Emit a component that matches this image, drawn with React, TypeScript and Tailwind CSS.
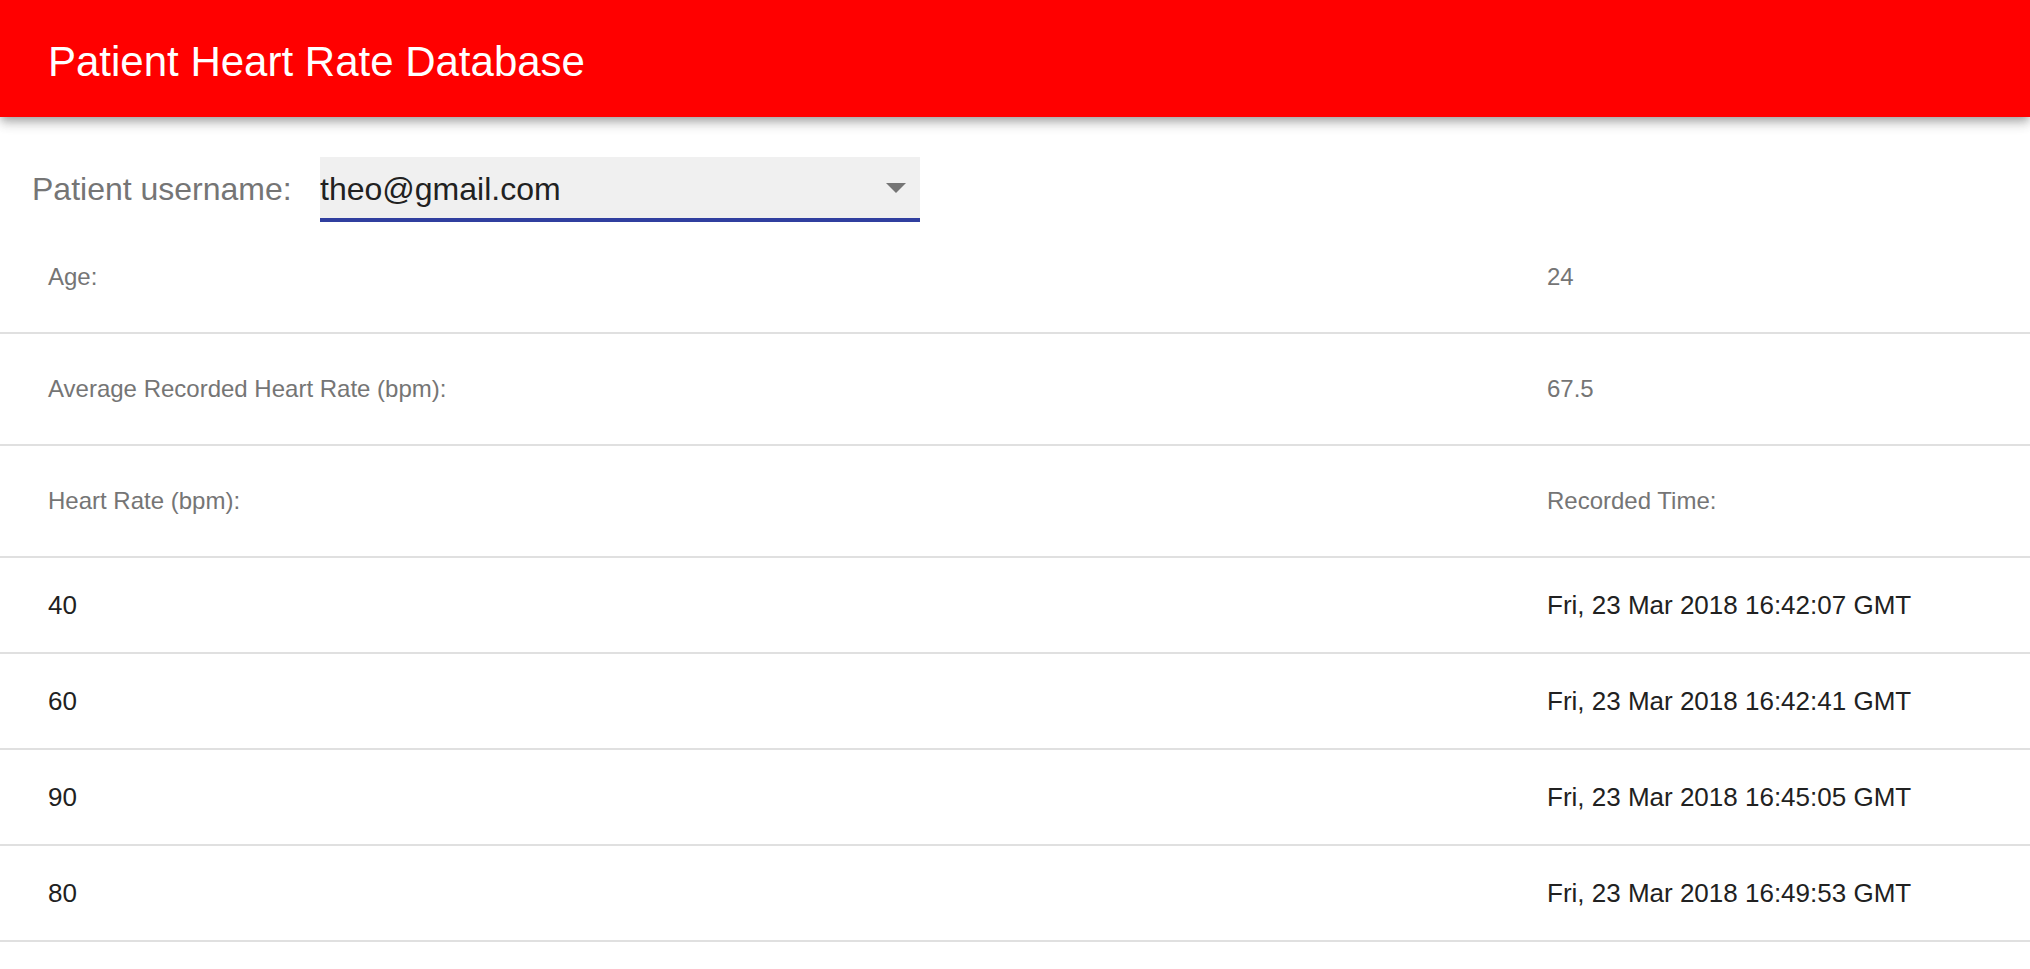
import React from "react";

const infoRows = [
  { label: "Age:", value: "24" },
  { label: "Average Recorded Heart Rate (bpm):", value: "67.5" },
  { label: "Heart Rate (bpm):", value: "Recorded Time:" },
];

const dataRows = [
  { hr: "40", time: "Fri, 23 Mar 2018 16:42:07 GMT" },
  { hr: "60", time: "Fri, 23 Mar 2018 16:42:41 GMT" },
  { hr: "90", time: "Fri, 23 Mar 2018 16:45:05 GMT" },
  { hr: "80", time: "Fri, 23 Mar 2018 16:49:53 GMT" },
];

export default function App() {
  return (
    <div className="min-h-screen w-full bg-white font-['Liberation_Sans',Arial,sans-serif]">
      <header className="relative z-10 flex h-[117px] items-center bg-[#ff0000] pl-[48px] pt-[6px] shadow-[0_4px_8px_-2px_rgba(0,0,0,0.25),0_8px_10px_0_rgba(0,0,0,0.12),0_2px_16px_0_rgba(0,0,0,0.1)]">
        <h1 className="text-[42px] font-normal leading-[48px] text-white">Patient Heart Rate Database</h1>
      </header>

      <div className="flex items-center pl-[32px] pt-[40px]">
        <span className="w-[288px] text-[32px] leading-[37px] text-[#757575]">Patient username:</span>
        <div className="flex h-[65px] w-[600px] items-center justify-between border-b-4 border-[#303f9f] bg-[#f0f0f0] pr-[14px] pt-[3px]">
          <span className="text-[32px] leading-[37px] text-[#212121]">theo@gmail.com</span>
          <svg width="20" height="10" viewBox="0 0 20 10" className="-mt-[3px]">
            <polygon points="0,0 20,0 10,10" fill="#757575" />
          </svg>
        </div>
      </div>

      <div className="w-full">
        {infoRows.map((r) => (
          <div
            key={r.label}
            className="grid h-[112px] grid-cols-[1499px_1fr] items-center border-b-2 border-[#e0e0e0] text-[24px] leading-[28px] text-[#757575]"
          >
            <div className="pl-[48px]">{r.label}</div>
            <div className="pl-[48px]">{r.value}</div>
          </div>
        ))}
        {dataRows.map((r) => (
          <div
            key={r.time}
            className="grid h-[96px] grid-cols-[1499px_1fr] items-center border-b-2 border-[#e0e0e0] text-[26px] leading-[30px] text-[#212121]"
          >
            <div className="pl-[48px]">{r.hr}</div>
            <div className="pl-[48px]">{r.time}</div>
          </div>
        ))}
      </div>
    </div>
  );
}
